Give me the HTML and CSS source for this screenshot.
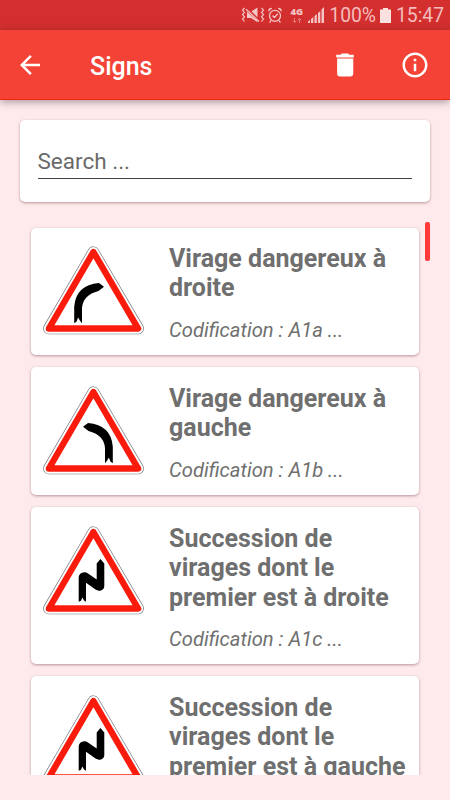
FILE: index.html
```
<!DOCTYPE html>
<html lang="en">
<head>
    <title>Signs</title>
    <meta charset="utf-8">
    <link rel="stylesheet" href="styles.css">
</head>
<body>

<!-- shared shapes -->
<svg class="defs">
    <symbol id="triangle" viewBox="0 0 101 90">
        <g stroke-linejoin="round">
            <path d="M50.4 7.2 L95.1 83.5 H5.9Z" fill="#fff" stroke="#777" stroke-width="11.6"/>
            <path d="M50.4 7.2 L95.1 83.5 H5.9Z" fill="#fff" stroke="#fff" stroke-width="10.3"/>
            <path d="M50.4 7 L95.1 83.5 H5.9Z" fill="#fff" stroke="#fb1b0d" stroke-width="6.4"/>
        </g>
    </symbol>
    <symbol id="bend" viewBox="0 0 101 90">
        <path d="M31.2 78.3 L33.6 76.5 L35.1 72.5 L37 75.8 L39 78.3 V63 Q40 50 55.5 46 L61 41.7 L56 38 Q33 40 31.2 61.5Z"/>
    </symbol>
    <symbol id="double-bend" viewBox="0 0 101 90">
        <path d="M35.7 76.8 L38 75.7 L39.4 72.6 L41 75.5 L43 76.8 V57.8 L52.5 64.6 Q55 66.3 58 65.4 Q61.3 64.5 61.3 60.8 V38.4 L57.4 34.1 L53.7 38.4 V54.6 L45 48.4 Q42 46.5 38.5 48 Q35.7 49.4 35.7 53Z"/>
    </symbol>
</svg>

<div class="status">
    <svg class="vibrate" width="24" height="18" viewBox="0 0 24 18">
        <g fill="none" stroke="currentColor" stroke-width="1.2">
            <path d="M3.5 2 L1.5 4.2 L3.5 6.4 L1.5 8.6 L3.5 10.8 L1.5 13 L3.5 15.5"/>
            <path d="M20.5 2 L22.5 4.2 L20.5 6.4 L22.5 8.6 L20.5 10.8 L22.5 13 L20.5 15.5"/>
            <path d="M5 3.2 L18 15.5"/>
        </g>
        <path fill="currentColor" d="M6 5.8 V12 H10 L16.5 16.2 V14.8Z M10.5 5.2 L16.5 1.5 V11.5Z"/>
    </svg>
    <svg class="alarm" width="14" height="17" viewBox="0 0 14 17">
        <g fill="none" stroke="currentColor" stroke-width="1.3">
            <circle cx="7" cy="8.8" r="5.5"/>
            <path d="M.7 4.2 Q1 1.5 3.8 1.5 M13.3 4.2 Q13 1.5 10.2 1.5 M4.5 8.5 L6.5 10.5 L9.8 6.8 M3 13.5 L1.6 15.6 M11 13.5 L12.4 15.6"/>
        </g>
    </svg>
    <div class="network">
        <b>4G</b>
        <svg width="10" height="5" viewBox="0 0 10 5"><path d="M2.5 0 V4.5 M.8 2.8 L2.5 4.5 L4.2 2.8 M7.5 5 V.5 M5.8 2.2 L7.5 .5 L9.2 2.2" fill="none" stroke="currentColor" stroke-width="1"/></svg>
    </div>
    <svg class="signal" width="17" height="16" viewBox="0 0 17 16">
        <path fill="currentColor" d="M0 16 V14.5 L2 13 V16Z M3 16 V12 L5.3 10 V16Z M6.5 16 V9 L8.8 7 V16Z M10 16 V6 L12.3 4 V16Z M13.5 16 V2.5 L16 0 V16Z"/>
    </svg>
    <span class="percent">100%</span>
    <svg class="battery" width="11" height="15" viewBox="0 0 11 15">
        <path fill="currentColor" d="M3 0 H8 V1.5 H11 V15 H0 V1.5 H3Z"/>
    </svg>
    <span class="time">15:47</span>
</div>

<div class="toolbar">
    <svg class="back" width="30" height="30" viewBox="0 0 24 24"><path fill="#fff" d="M20 11H7.83l5.59-5.59L12 4l-8 8 8 8 1.41-1.41L7.83 13H20z"/></svg>
    <h1>Signs</h1>
    <svg class="trash" width="30" height="30" viewBox="0 0 24 24"><path fill="#fff" d="M5.7 6.8 H18.6 V18.8 Q18.6 21.2 16.2 21.2 H8.1 Q5.7 21.2 5.7 18.8Z M5 3.8 H8.5 L9.5 2.7 H14.5 L15.5 3.8 H19 V6 H5Z"/></svg>
    <svg width="30" height="30" viewBox="0 0 24 24"><path fill="#fff" d="M11 17h2v-6h-2v6zm1-15C6.48 2 2 6.48 2 12s4.48 10 10 10 10-4.48 10-10S17.52 2 12 2zm0 18c-4.41 0-8-3.59-8-8s3.59-8 8-8 8 3.59 8 8-3.59 8-8 8zM11 9h2V7h-2v2z"/></svg>
</div>

<div class="search card">
    <input type="text" placeholder="Search ...">
</div>

<div class="list">
    <div class="sign card">
        <svg class="picture"><use href="#triangle"/><use href="#bend"/></svg>
        <div class="text">
            <h2>Virage dangereux à droite</h2>
            <p>Codification : A1a ...</p>
        </div>
    </div>
    <div class="sign card">
        <svg class="picture"><use href="#triangle"/><use href="#bend" transform="translate(101 0) scale(-1 1)"/></svg>
        <div class="text">
            <h2>Virage dangereux à gauche</h2>
            <p>Codification : A1b ...</p>
        </div>
    </div>
    <div class="sign card">
        <svg class="picture"><use href="#triangle"/><use href="#double-bend"/></svg>
        <div class="text">
            <h2>Succession de virages dont le premier est à droite</h2>
            <p>Codification : A1c ...</p>
        </div>
    </div>
    <div class="sign card">
        <svg class="picture"><use href="#triangle"/><use href="#double-bend"/></svg>
        <div class="text">
            <h2>Succession de virages dont le premier est à gauche</h2>
        </div>
    </div>
    <div class="scrollbar"></div>
</div>

</body>
</html>
```
FILE: styles.css
```
* {
    box-sizing: border-box;
}

body {
    margin: 0;
    height: 800px;
    overflow: hidden;
    background: #feeaec;
    font-family: Roboto, sans-serif;
    color: #6f6f6f;
}

h1, h2, p {
    margin: 0;
}

.defs {
    display: none;
}

.status {
    display: flex;
    align-items: center;
    height: 30px;
    padding-right: 6px;
    justify-content: flex-end;
    background: #d32f2f;
    color: #f5c4c4;
}

.alarm {
    margin-left: 3px;
}

.network {
    display: flex;
    flex-direction: column;
    align-items: center;
    width: 13px;
    margin-left: 8px;
    font: bold 9.5px/10px "Noto Sans", sans-serif;
}

.network svg {
    margin-top: 1px;
    opacity: 0.5;
}

.signal {
    margin-left: 5px;
}

.percent, .time {
    padding-top: 1px;
    font-size: 19.3px;
    color: #f3bcbc;
}

.percent {
    margin-left: 4px;
}

.battery {
    margin: 0 5px 0 4px;
    color: #fbe0e0;
}

.toolbar {
    display: flex;
    align-items: center;
    height: 70px;
    padding: 0 20px 0 15px;
    background: #f44336;
    border-bottom: 1px solid #ee2415;
    box-shadow: 0 2px 8px rgba(0, 0, 0, 0.35);
}

.toolbar h1 {
    flex: 1;
    margin-left: 45px;
    padding-top: 3px;
    font-size: 25px;
    font-weight: 500;
    color: #fff;
}

.trash {
    margin-right: 40px;
}

.card {
    background: #fff;
    border-radius: 5px;
    box-shadow: 0 1px 3px rgba(80, 20, 30, 0.4);
}

.search {
    height: 81.5px;
    margin: 20px 20px 0;
    padding: 22px 18px 22px 17.5px;
}

.search input {
    display: block;
    width: 100%;
    height: 37px;
    padding: 2px 0 0;
    border: 0;
    border-bottom: 1px solid #424242;
    outline: 0;
    background: none;
    font: 22.5px Roboto, sans-serif;
}

.search input::placeholder {
    color: #6a6a6a;
}

.list {
    display: flex;
    flex-direction: column;
    gap: 12.5px;
    position: relative;
    height: 560px;
    margin: 13.5px 20px 0;
    padding: 12.6px 11px 0;
    overflow: hidden;
}

.sign {
    display: flex;
    flex-shrink: 0;
    padding: 16.4px 12px 12.3px;
}

.picture {
    flex-shrink: 0;
    width: 101px;
    height: 90px;
    margin: 1px 25px 0 0;
}

.text {
    flex: 1;
}

.text h2 {
    font-size: 25px;
    font-weight: bold;
    line-height: 29.5px;
}

.text p {
    margin-top: 16.1px;
    font-size: 20.2px;
    font-style: italic;
    line-height: 23.5px;
}

.scrollbar {
    position: absolute;
    top: 6.5px;
    right: 0;
    width: 5px;
    height: 39px;
    border-radius: 2px;
    background: #ff3a38;
}
```
